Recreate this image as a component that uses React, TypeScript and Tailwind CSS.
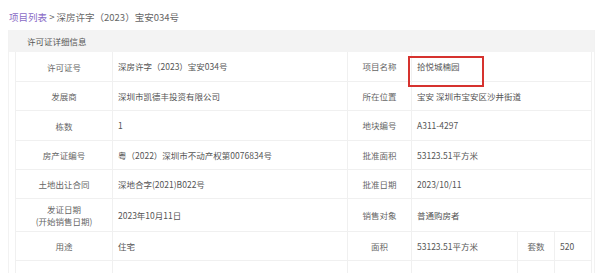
export default function App() {
  const rows: { h: string; cells: [string, string, string, string] }[] = [
    { h: "h-[30px]", cells: ["许可证号", "深房许字（2023）宝安034号", "项目名称", "拾悦城楠园"] },
    { h: "h-[29px]", cells: ["发展商", "深圳市凯德丰投资有限公司", "所在位置", "宝安 深圳市宝安区沙井街道"] },
    { h: "h-[30px]", cells: ["栋数", "1", "地块编号", "A311-4297"] },
    { h: "h-[29px]", cells: ["房产证编号", "粤（2022）深圳市不动产权第0076834号", "批准面积", "53123.51平方米"] },
    { h: "h-[29px]", cells: ["土地出让合同", "深地合字(2021)B022号", "批准日期", "2023/10/11"] },
    { h: "h-[33px]", cells: ["发证日期\n(开始销售日期)", "2023年10月11日", "销售对象", "普通购房者"] },
  ];

  return (
    <div className="w-[600px] h-[273px] overflow-hidden bg-white font-['Noto_Sans_CJK_SC',sans-serif]">
      <div className="h-[30px] pl-[9px] pt-[10px] text-[9.5px] leading-[14px] text-[#666]">
        <span className="text-[#8a6bc6]">项目列表</span>
        <span> &gt; </span>
        <span>深房许字（2023）宝安034号</span>
      </div>

      <div className="relative ml-[8px] w-[587px] border-l border-r border-[#f2f2f2]">
        <div className="h-[22px] bg-[#f3f3f3] pl-[18px] flex items-center text-[8.5px] text-[#555]">
          许可证详细信息
        </div>

        <div className="pl-[6px] pr-[2px] text-[8.5px] text-[#555]">
          {rows.map((r, i) => (
            <div key={i} className={`flex border-b border-[#f0f0f0] ${r.h}`}>
              <div className="w-[98px] border-l border-r border-[#f0f0f0] flex items-center justify-center text-center whitespace-pre-line leading-[12px] text-[#666]">
                {r.cells[0]}
              </div>
              <div className="w-[235px] border-r border-[#f0f0f0] flex items-center pl-[5px]">{r.cells[1]}</div>
              <div className="w-[64px] border-r border-[#f0f0f0] flex items-center justify-center text-[#666]">
                {r.cells[2]}
              </div>
              <div className="flex-1 border-r border-[#f0f0f0] flex items-center pl-[5px]">{r.cells[3]}</div>
            </div>
          ))}
          <div className="flex h-[29px] border-b border-[#f0f0f0]">
            <div className="w-[98px] border-l border-r border-[#f0f0f0] flex items-center justify-center text-[#666]">用途</div>
            <div className="w-[235px] border-r border-[#f0f0f0] flex items-center pl-[5px]">住宅</div>
            <div className="w-[64px] border-r border-[#f0f0f0] flex items-center justify-center text-[#666]">面积</div>
            <div className="w-[106px] border-r border-[#f0f0f0] flex items-center pl-[5px]">53123.51平方米</div>
            <div className="w-[37px] border-r border-[#f0f0f0] flex items-center justify-center text-[#666]">套数</div>
            <div className="flex-1 border-r border-[#f0f0f0] flex items-center pl-[5px]">520</div>
          </div>
          <div className="flex h-[29px]">
            <div className="w-[98px] border-l border-r border-[#f0f0f0]" />
            <div className="w-[235px] border-r border-[#f0f0f0]" />
            <div className="w-[64px] border-r border-[#f0f0f0]" />
            <div className="w-[106px] border-r border-[#f0f0f0]" />
            <div className="w-[37px] border-r border-[#f0f0f0]" />
            <div className="flex-1 border-r border-[#f0f0f0]" />
          </div>
        </div>

        <div className="absolute left-[399px] top-[26px] w-[76px] h-[31px] border-2 border-[#d6322e]" />
      </div>
    </div>
  );
}
